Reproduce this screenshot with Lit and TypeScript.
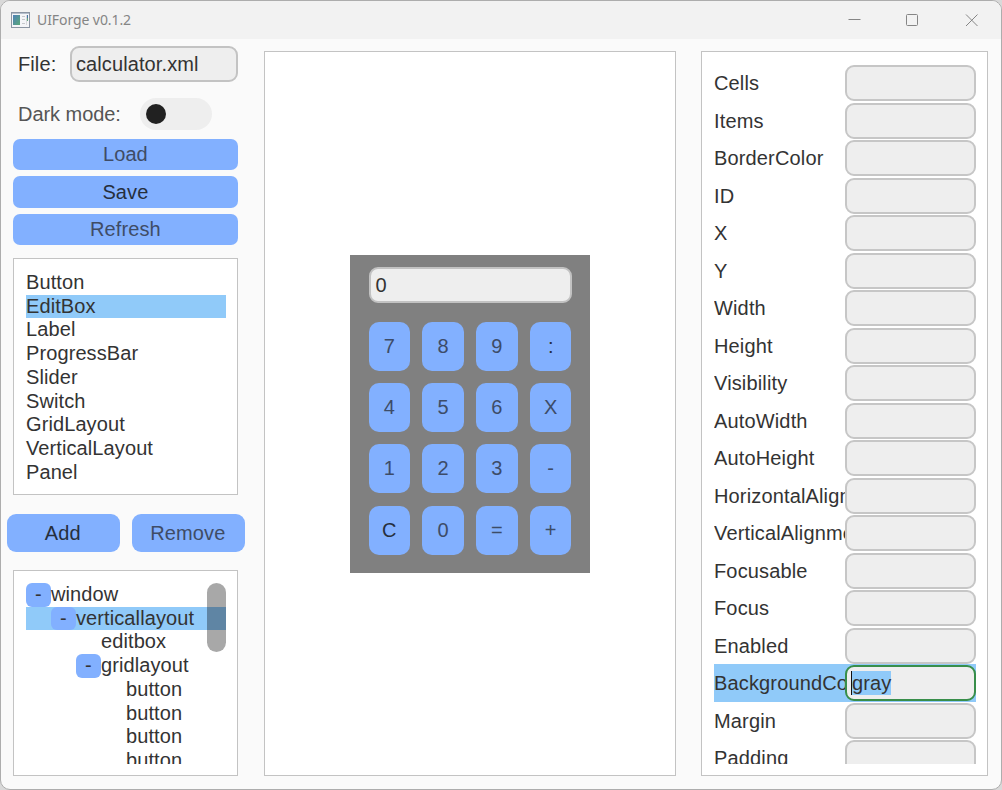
import { LitElement, html, css, svg } from "lit";
import { customElement, property } from "lit/decorators.js";
import { classMap } from "lit/directives/class-map.js";

const WIDGETS = ["Button", "EditBox", "Label", "ProgressBar", "Slider", "Switch", "GridLayout", "VerticalLayout", "Panel"];

const TREE: { name: string; depth: number; open?: boolean }[] = [
  { name: "window", depth: 0, open: true },
  { name: "verticallayout", depth: 1, open: true },
  { name: "editbox", depth: 3 },
  { name: "gridlayout", depth: 2, open: true },
  { name: "button", depth: 4 },
  { name: "button", depth: 4 },
  { name: "button", depth: 4 },
  { name: "button", depth: 4 },
];

const PROPS = [
  "Cells", "Items", "BorderColor", "ID", "X", "Y", "Width", "Height", "Visibility",
  "AutoWidth", "AutoHeight", "HorizontalAlignment", "VerticalAlignment", "Focusable",
  "Focus", "Enabled", "BackgroundColor", "Margin", "Padding",
];

const KEYS = ["7", "8", "9", ":", "4", "5", "6", "X", "1", "2", "3", "-", "C", "0", "=", "+"];
const DARK_KEYS = ["C", ":"];

@customElement("title-bar")
class TitleBar extends LitElement {
  static styles = css`
    :host { display: flex; height: 38px; background: #f2f2f2; align-items: center; padding-left: 10px; box-sizing: border-box; }
    .icon { display: block; margin-top: -1px; }
    .title { margin-left: 7px; font: 14px "Noto Sans", sans-serif; line-height: 20px; color: #858585; flex: 1; letter-spacing: -0.08px; }
    .controls { display: flex; padding-right: 0.5px; }
    .control { width: 58.5px; display: flex; justify-content: center; }
    .glyph { display: block; }
  `;
  private control(shape: unknown) {
    return html`<div class="control"><svg class="glyph" width="13" height="13" viewBox="0 0 13 13" fill="none" stroke="#858585">${shape}</svg></div>`;
  }
  render() {
    return html`
      <svg class="icon" width="19" height="16" viewBox="0 0 19 16">
        <defs><linearGradient id="g" x1="0" y1="0" x2="1" y2="1"><stop offset="0" stop-color="#5080b8" /><stop offset="1" stop-color="#58a878" /></linearGradient></defs>
        <rect x=".5" y=".5" width="18" height="15" fill="#f4f5f8" stroke="#8b95a3" />
        <rect x="1" y="1" width="17" height="1" fill="#b4becb" />
        <rect x="2" y="3" width="7" height="10" fill="url(#g)" />
        <path d="M11 4.5h3M11 7.5h3M11 11.5h3" stroke="#c5c7cb" />
        <path d="M15.5 3v10" stroke="#d8d9dd" />
        <path d="M16.5 3v3" stroke="#4476a8" /><path d="M16.5 6v3" stroke="#62a67d" />
      </svg>
      <div class="title">UIForge v0.1.2</div>
      <div class="controls">
        ${this.control(svg`<path d="M.5 5.5h12" />`)}
        ${this.control(svg`<rect x=".5" y=".5" width="11" height="11" rx="1" />`)}
        ${this.control(svg`<path d="M1 .5l11.500 11.500M12.500 .5l-11.500 11.500" />`)}
      </div>`;
  }
}

@customElement("calc-preview")
class CalcPreview extends LitElement {
  static styles = css`
    :host { display: block; box-sizing: border-box; width: 240px; height: 318px; background: #808080; padding: 12px 18.5px; }
    .display { box-sizing: border-box; height: 36px; border: 2px solid #c2c2c2; border-radius: 9px; background: #eee; padding-left: 5px; line-height: 33px; color: #333; }
    .keys { display: grid; grid-template-columns: repeat(4, 41.5px); grid-auto-rows: 49px; justify-content: space-between; row-gap: 12.3px; margin-top: 19px; }
    .key { background: #82b0ff; border-radius: 10px; display: flex; align-items: center; justify-content: center; color: #3d4c68; }
    .dark { color: #262f3d; }
  `;
  render() {
    return html`<div class="display">0</div>
      <div class="keys">${KEYS.map((k) => html`<div class=${classMap({ key: true, dark: DARK_KEYS.includes(k) })}>${k}</div>`)}</div>`;
  }
}

@customElement("widget-tree")
class WidgetTree extends LitElement {
  @property() selected = "verticallayout";
  static styles = css`
    :host { display: block; position: relative; height: 181px; overflow: hidden; }
    .row { display: flex; height: 23.75px; line-height: 23.4px; }
    .selected { background: #90caf9; }
    .toggle { width: 25px; height: 23.75px; border-radius: 6px; background: #82b0ff; text-align: center; flex: none; }
    .bar { position: absolute; right: 0; top: 0; width: 19px; height: 69px; border-radius: 9.5px; background: rgba(0, 0, 0, 0.34); }
  `;
  render() {
    return html`${TREE.map((n) => html`
      <div class=${classMap({ row: true, selected: n.name === this.selected })} style="padding-left:${n.depth * 25}px">
        ${n.open ? html`<div class="toggle">-</div>` : ""}<div>${n.name}</div>
      </div>`)}<div class="bar"></div>`;
  }
}

@customElement("property-grid")
class PropertyGrid extends LitElement {
  static styles = css`
    :host { display: block; height: 700px; overflow: hidden; }
    .row { display: grid; grid-template-columns: 131px 131px; height: 37.5px; }
    .selected { background: #90caf9; }
    .name { overflow: hidden; white-space: nowrap; line-height: 38.4px; letter-spacing: 0.15px; }
    .field { box-sizing: border-box; height: 36px; margin-top: 0.75px; border: 2px solid #c6c6c6; border-radius: 9px; background: #eee; display: flex; align-items: center; padding-left: 4px; }
    .focused { border-color: #388e4a; }
    .value { background: #90caf9; line-height: 24px; height: 24px; border-left: 1px solid #111; }
  `;
  render() {
    return PROPS.map((p) => {
      const active = p === "BackgroundColor";
      return html`<div class=${classMap({ row: true, selected: active })}>
        <div class="name">${p}</div>
        <div class=${classMap({ field: true, focused: active })}>${active ? html`<span class="value">gray</span>` : ""}</div>
      </div>`;
    });
  }
}

@customElement("app-root")
class AppRoot extends LitElement {
  static styles = css`
    :host { display: block; height: 790px; background: #d9d9d9; font: 20px "Liberation Sans", Arial, sans-serif; color: #333; letter-spacing: 0.1px; }
    .window { box-sizing: border-box; width: 1002px; height: 790px; border: 1px solid #adadad; border-radius: 10px; overflow: hidden; background: #fafafa; }
    .body { display: flex; align-items: flex-start; }
    .side { width: 238px; margin-left: 6px; padding-top: 7px; }
    .inset { margin-left: 6.4px; margin-right: 6.6px; }
    .file { display: flex; align-items: center; height: 36px; padding-left: 11px; }
    .file-label { width: 52px; }
    .file-input { box-sizing: border-box; width: 168px; height: 36px; border: 2px solid #c3c3c3; border-radius: 9px; background: #eee; line-height: 33px; padding-left: 4px; }
    .mode { display: flex; align-items: center; height: 32px; margin-top: 16px; padding-left: 11px; color: #555; letter-spacing: -0.05px; }
    .mode-label { width: 122px; }
    .switch { width: 72px; height: 32px; border-radius: 16px; background: #eee; display: flex; align-items: center; padding-left: 6px; box-sizing: border-box; }
    .knob { width: 20px; height: 20px; border-radius: 50%; background: #212121; }
    .actions { display: flex; flex-direction: column; gap: 6.2px; margin-top: 9px; }
    .btn { background: #82b0ff; display: flex; align-items: center; justify-content: center; color: #262f3d; border-radius: 7px; height: 31.3px; padding-right: 1px; }
    .soft { color: #3f4c66; }
    .panel { box-sizing: border-box; border: 1px solid #c3c3c3; background: #fff; padding: 11.5px; }
    .side .panel { padding-left: 11.6px; }
    .widgets { height: 237px; margin-top: 13px; }
    .item { height: 23.75px; line-height: 23.4px; }
    .item.selected { background: #90caf9; }
    .pair { display: grid; grid-template-columns: 112.5px 112.5px; justify-content: space-between; margin: 19px 0.4px 0 0; }
    .pair .btn { height: 37.5px; border-radius: 9px; }
    .tree { height: 206px; margin-top: 18.5px; }
    .canvas { width: 412px; height: 725px; margin: 12.4px 0 0 19px; display: flex; justify-content: center; align-items: center; padding: 0; }
    .props { width: 287px; height: 725px; margin: 12.4px 0 0 25px; padding: 12px 11px 11px 12px; }
  `;
  render() {
    return html`<div class="window">
      <title-bar></title-bar>
      <div class="body">
        <div class="side">
          <div class="file"><div class="file-label">File:</div><div class="file-input">calculator.xml</div></div>
          <div class="mode"><div class="mode-label">Dark mode:</div><div class="switch"><div class="knob"></div></div></div>
          <div class="actions inset">
            <div class="btn soft">Load</div><div class="btn">Save</div><div class="btn soft">Refresh</div>
          </div>
          <div class="panel widgets inset">
            ${WIDGETS.map((w) => html`<div class=${classMap({ item: true, selected: w === "EditBox" })}>${w}</div>`)}
          </div>
          <div class="pair"><div class="btn">Add</div><div class="btn soft">Remove</div></div>
          <div class="panel tree inset"><widget-tree></widget-tree></div>
        </div>
        <div class="panel canvas"><calc-preview></calc-preview></div>
        <div class="panel props"><property-grid></property-grid></div>
      </div>
    </div>`;
  }
}
